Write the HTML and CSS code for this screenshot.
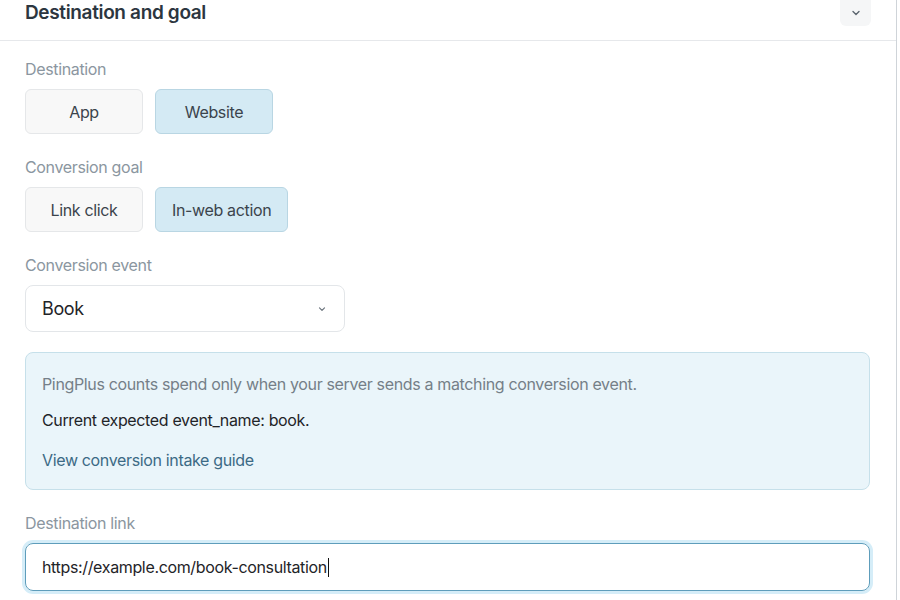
FILE: index.html
```html
<!DOCTYPE html>
<html lang="en">
<head>
<meta charset="utf-8">
<title>Destination and goal</title>
<link rel="stylesheet" href="styles.css">
</head>
<body>
<section class="card">
  <header class="card-header">
    <h2 class="card-title">Destination and goal</h2>
    <button class="collapse-btn" aria-label="Collapse">
      <svg width="12" height="12" viewBox="0 0 12 12"><path d="M3 4.5 L6 7.5 L9 4.5" fill="none" stroke="#5c6670" stroke-width="1.4" stroke-linecap="round" stroke-linejoin="round"/></svg>
    </button>
  </header>
  <div class="card-body">
    <div class="field">
      <div class="field-label">Destination</div>
      <div class="options">
        <button class="option">App</button>
        <button class="option selected">Website</button>
      </div>
    </div>
    <div class="field">
      <div class="field-label">Conversion goal</div>
      <div class="options">
        <button class="option">Link click</button>
        <button class="option selected">In-web action</button>
      </div>
    </div>
    <div class="field">
      <div class="field-label">Conversion event</div>
      <div class="select">
        <span class="select-value">Book</span>
        <svg class="select-chevron" width="10" height="10" viewBox="0 0 10 10"><path d="M2.5 3.8 L5 6.3 L7.5 3.8" fill="none" stroke="#6a737c" stroke-width="1.2" stroke-linecap="round" stroke-linejoin="round"/></svg>
      </div>
    </div>
    <div class="info-box">
      <p class="info-muted">PingPlus counts spend only when your server sends a matching conversion event.</p>
      <p class="info-strong">Current expected event_name: book.</p>
      <a class="info-link" href="#">View conversion intake guide</a>
    </div>
    <div class="field">
      <div class="field-label">Destination link</div>
      <div class="text-input"><span>https://example.com/book-consultation</span><span class="caret"></span></div>
    </div>
  </div>
</section>
</body>
</html>
```
FILE: styles.css
```css
* { box-sizing: border-box; }
html, body { margin: 0; padding: 0; background: #ffffff; }
body {
  font-family: Inter, "Noto Sans", "Liberation Sans", sans-serif;
  color: #1f2428;
  width: 900px;
  height: 600px;
  overflow: hidden;
  letter-spacing: -0.35px;
}
.card {
  width: 897px;
  border-right: 1px solid #cfd4d9;
  height: 600px;
  background: #fff;
}
.card-header {
  display: flex;
  justify-content: space-between;
  align-items: flex-start;
  height: 41px;
  border-bottom: 1px solid #e6e8eb;
  padding: 0 25px 0 25px;
}
.card-title {
  margin: 0;
  font-size: 19px;
  line-height: 26px;
  font-weight: 600;
  color: #2c3640;
  letter-spacing: -0.35px;
}
.collapse-btn {
  width: 31px;
  height: 26px;
  border: none;
  border-radius: 0 0 6px 6px;
  background: #f5f6f7;
  display: flex;
  align-items: center;
  justify-content: center;
  padding: 0;
}
.card-body {
  padding: 18px 26px 0 25px;
  display: flex;
  flex-direction: column;
  gap: 23px;
}
.field { display: flex; flex-direction: column; }
.field-label {
  font-size: 16px;
  line-height: 20px;
  color: #8b96a0;
  margin-bottom: 10px;
}
.options { display: flex; gap: 12px; }
.option {
  min-width: 118px;
  height: 45px;
  padding: 0 16px;
  border-radius: 6px;
  border: 1px solid #e5e7e9;
  background: #f8f8f8;
  font-family: inherit;
  letter-spacing: inherit;
  font-size: 16px;
  color: #3b444c;
}
.option.selected {
  background: #d4eaf4;
  border-color: #b9d6e3;
}
.select {
  width: 320px;
  height: 47px;
  border: 1px solid #e3e6e9;
  border-radius: 8px;
  display: flex;
  align-items: center;
  justify-content: space-between;
  padding: 0 17px 0 16px;
  background: #fff;
}
.select-value { font-size: 18px; color: #1f2428; }
.info-box {
  margin-top: -3px;
  background: #eaf5fa;
  border: 1px solid #c6e0ea;
  border-radius: 8px;
  padding: 20px 16px 18px 16px;
  font-size: 16px;
  line-height: 22px;
}
.info-box p { margin: 0 0 14px 0; }
.info-muted { color: #757f88; }
.info-strong { color: #1f2428; }
.info-link {
  display: block;
  margin-top: 18px;
  color: #3c6a85;
  text-decoration: none;
}
.text-input {
  height: 48px;
  border: 1px solid #5e9dbb;
  border-radius: 8px;
  box-shadow: 0 0 0 3px #d5edf8;
  display: flex;
  align-items: center;
  padding: 0 16px;
  font-size: 16px;
  color: #1f2428;
}
.caret {
  display: inline-block;
  width: 1px;
  height: 19px;
  background: #111;
  margin-left: 1px;
}
```
